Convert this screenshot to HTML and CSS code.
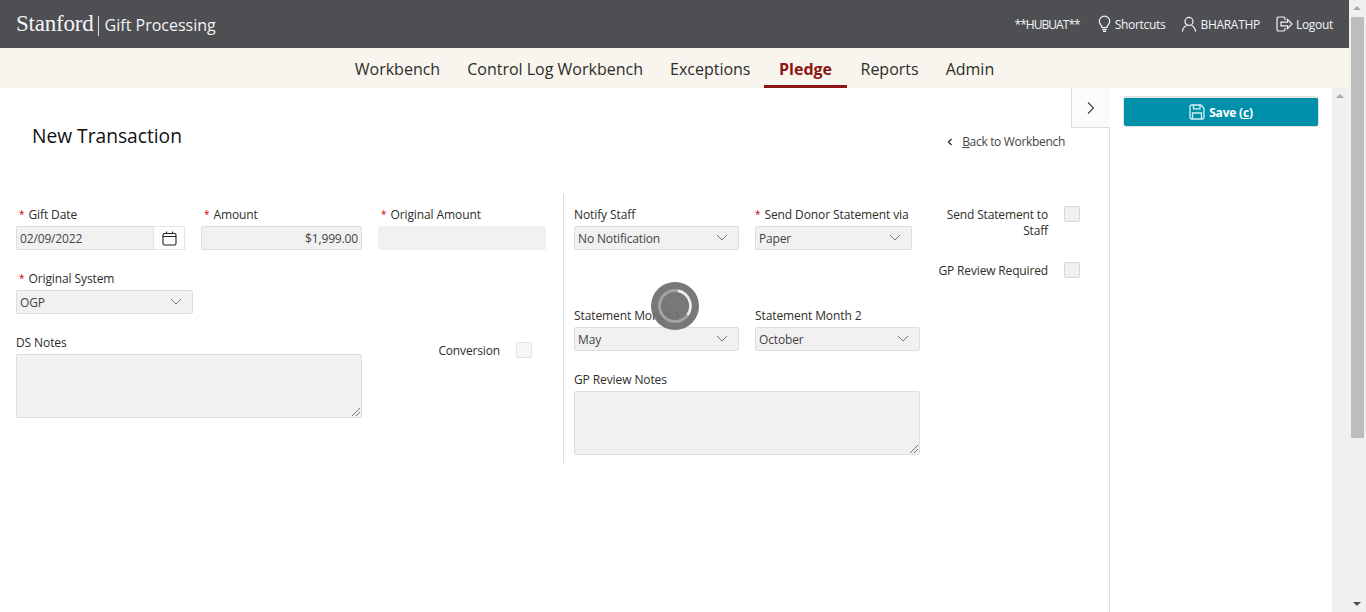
FILE: index.html
```html
<!DOCTYPE html>
<html lang="en">
<head>
  <meta charset="UTF-8" />
  <meta name="viewport" content="width=device-width, initial-scale=1.0"/>
  <title>Gift Processing</title>
  <link rel="stylesheet" href="styles.css">
</head>
<body>
  <div class="app">
    <!-- Top bar -->
    <header class="topbar">
      <div class="brand"><span class="brand-name">Stanford</span><span class="brand-sep"></span><span class="brand-app">Gift Processing</span></div>
      <div class="topbar-links">
        <span class="env">**HUBUAT**</span>
        <a class="top-link">
          <svg width="15" height="18" viewBox="0 0 15 18" fill="none" stroke="currentColor" stroke-width="1.2"><path d="M5.100 12.500c0-2-2.800-3.200-2.800-6.200a5.200 5.200 0 0 1 10.400 0c0 3-2.800 4.200-2.800 6.200z"/><path d="M5.300 14.400h4.400M5.900 16.200h3.200" stroke-width="1.4"/></svg>
          Shortcuts
        </a>
        <a class="top-link">
          <svg width="16" height="17" viewBox="0 0 16 17" fill="none" stroke="currentColor" stroke-width="1.2"><circle cx="8" cy="5.4" r="4"/><path d="M1.4 15.6c.3-3.4 2.6-5.2 4-6M14.6 15.6c-.3-3.4-2.6-5.2-4-6"/></svg>
          BHARATHP
        </a>
        <a class="top-link">
          <svg width="17" height="16" viewBox="0 0 17 16" fill="none" stroke="currentColor" stroke-width="1.2"><path d="M9 4V2.600C9 1.700 8.300 1 7.400 1H2.600C1.700 1 1 1.700 1 2.600v10.800c0 .9.7 1.600 1.600 1.600h4.800c.9 0 1.600-.7 1.600-1.600V12"/><path d="M5 6.200h6.500V3.400L16 8l-4.500 4.600V9.800H5z"/></svg>
          Logout
        </a>
      </div>
    </header>

    <!-- Main nav -->
    <nav class="mainnav">
      <a>Workbench</a>
      <a>Control Log Workbench</a>
      <a>Exceptions</a>
      <a class="active">Pledge</a>
      <a>Reports</a>
      <a>Admin</a>
    </nav>

    <div class="content">
      <main class="main">
        <button class="panel-toggle">
          <svg width="10" height="14" viewBox="0 0 10 14" fill="none" stroke="#444" stroke-width="1.2"><path d="M2 1.500 7.500 7 2 12.500"/></svg>
        </button>

        <div class="page-head">
          <h1>New Transaction</h1>
          <a class="back-link">
            <svg width="6" height="8" viewBox="0 0 6 8" fill="none" stroke="#333" stroke-width="1.400"><path d="M4.500 1 1.500 4l3 3"/></svg>
            <span><u>B</u>ack to Workbench</span>
          </a>
        </div>

        <div class="form">
          <section class="form-left">
            <div class="field">
              <label><i>*</i> Gift Date</label>
              <div class="date-input">
                <span class="box grow">02/09/2022</span>
                <span class="cal-btn">
                  <svg width="15" height="15" viewBox="0 0 15 15" fill="none" stroke="#222" stroke-width="1.100"><rect x="1" y="2.500" width="13" height="11.500" rx="1.500"/><path d="M1 5.500h13M4.500 .5v2.500M10.500 .5v2.500"/></svg>
                </span>
              </div>
            </div>
            <div class="field">
              <label><i>*</i> Amount</label>
              <span class="box right">$1,999.00</span>
            </div>
            <div class="field">
              <label><i>*</i> Original Amount</label>
              <span class="box plain"></span>
            </div>

            <div class="field wide-system">
              <label><i>*</i> Original System</label>
              <span class="box select">OGP<svg class="caret" width="12" height="7" viewBox="0 0 12 7" fill="none" stroke="#777"><path d="M1 1l5 5 5-5"/></svg></span>
            </div>

            <div class="field notes-left">
              <label>DS Notes</label>
              <div class="box area"><span class="grip"></span></div>
            </div>
            <div class="check-row conversion">
              <span>Conversion</span>
              <span class="check light"></span>
            </div>
          </section>

          <section class="form-right">
            <div class="field">
              <label>Notify Staff</label>
              <span class="box select">No Notification<svg class="caret" width="12" height="7" viewBox="0 0 12 7" fill="none" stroke="#777"><path d="M1 1l5 5 5-5"/></svg></span>
            </div>
            <div class="field">
              <label><i>*</i> Send Donor Statement via</label>
              <span class="box select short">Paper<svg class="caret" width="12" height="7" viewBox="0 0 12 7" fill="none" stroke="#777"><path d="M1 1l5 5 5-5"/></svg></span>
            </div>
            <div class="checks">
              <div class="check-row">
                <span>Send Statement to Staff</span>
                <span class="check"></span>
              </div>
              <div class="check-row">
                <span>GP Review Required</span>
                <span class="check"></span>
              </div>
            </div>

            <div class="field">
              <label>Statement Month 1</label>
              <span class="box select">May<svg class="caret" width="12" height="7" viewBox="0 0 12 7" fill="none" stroke="#777"><path d="M1 1l5 5 5-5"/></svg></span>
            </div>
            <div class="field">
              <label>Statement Month 2</label>
              <span class="box select">October<svg class="caret" width="12" height="7" viewBox="0 0 12 7" fill="none" stroke="#777"><path d="M1 1l5 5 5-5"/></svg></span>
            </div>

            <div class="field notes-right">
              <label>GP Review Notes</label>
              <div class="box area"><span class="grip"></span></div>
            </div>
          </section>
        </div>

        <!-- Loading spinner -->
        <div class="spinner">
          <svg width="48" height="48" viewBox="0 0 48 48" fill="none">
            <circle cx="24" cy="24" r="15.500" stroke="#a3a3a3" stroke-width="3"/>
            <path d="M27 8.800A15.500 15.500 0 0 1 36.500 33" stroke="#eee" stroke-width="2.500"/>
          </svg>
        </div>
      </main>

      <aside class="side">
        <button class="save-btn">
          <svg width="16" height="16" viewBox="0 0 16 16" fill="none" stroke="#d6eef3" stroke-width="1.300"><path d="M1 2.500C1 1.700 1.700 1 2.500 1h9.300L15 4.200v9.300c0 .8-.7 1.500-1.500 1.500h-11C1.700 15 1 14.300 1 13.500z"/><path d="M4.500 1v3.800h6.500V1M3.500 15V9h9v6"/></svg>
          <span>Save (<u>c</u>)</span>
        </button>
      </aside>
      <div class="scrollbar inner"><b class="arrow-up"></b></div>
    </div>
  </div>

  <div class="scrollbar outer">
    <b class="arrow-up"></b>
    <div class="thumb"></div>
    <b class="arrow-down"></b>
  </div>
</body>
</html>
```

FILE: styles.css
```css
* {
  box-sizing: border-box;
}

body {
  margin: 0;
  height: 612px;
  overflow: hidden;
  display: flex;
  background: #fff;
  color: #2e2d29;
  font-family: 'Open Sans', 'Noto Sans', sans-serif;
  font-size: 12px;
}

.app {
  width: 1349px;
  display: flex;
  flex-direction: column;
}

/* Top bar */
.topbar {
  height: 48px;
  flex: none;
  background: #4d4f53;
  color: #f4f4f4;
  display: flex;
  align-items: center;
  justify-content: space-between;
  padding: 0 16px;
}

.brand {
  display: flex;
  align-items: center;
}

.brand-name {
  font-family: 'Liberation Serif', serif;
  font-size: 23px;
  letter-spacing: -0.2px;
}

.brand-sep {
  width: 1px;
  height: 20px;
  margin: 3px 6px 0 4px;
  background: #ddd;
}

.brand-app {
  font-family: 'Open Sans', sans-serif;
  font-size: 16px;
  font-weight: 500;
  margin-top: 2px;
}

.topbar-links {
  display: flex;
  align-items: center;
  gap: 16px;
  letter-spacing: -0.3px;
}

.env {
  letter-spacing: -0.95px;
  margin-right: 1px;
}

.top-link {
  display: flex;
  align-items: center;
  gap: 3px;
}

/* Main nav */
.mainnav {
  height: 40px;
  flex: none;
  background: #f8f5ee;
  display: flex;
  justify-content: center;
}

.mainnav a {
  padding: 0 13.500px;
  line-height: 42px;
  font-size: 16px;
  color: #2e2d29;
}

.mainnav a.active {
  color: #8c1515;
  font-weight: 700;
  border-bottom: 3px solid #8c1515;
  padding: 0 15px;
}

.content {
  flex: 1;
  display: flex;
  min-height: 0;
}

.main {
  position: relative;
  width: 1110px;
  flex: none;
  padding-left: 16px;
  border-right: 1px solid #ddd;
}

.panel-toggle {
  position: absolute;
  top: 0;
  right: -1px;
  width: 39px;
  height: 40px;
  padding: 0;
  display: flex;
  align-items: center;
  justify-content: center;
  background: #fbfbfb;
  border: 1px solid #ddd;
  border-width: 0 0 1px 1px;
}

.page-head {
  height: 106px;
  display: flex;
  align-items: flex-start;
  justify-content: space-between;
  padding: 35px 44px 0 16px;
}

.page-head h1 {
  margin: 0;
  font-size: 19.200px;
  line-height: 26px;
  font-weight: 500;
  color: #111;
}

.back-link {
  display: flex;
  align-items: center;
  gap: 9px;
  margin-top: 10px;
  color: #444;
  letter-spacing: -0.32px;
}

.form {
  display: flex;
}

.form-left {
  width: 547px;
  flex: none;
  padding-top: 12px;
  display: grid;
  grid-template-columns: 169px 161px 168px;
  grid-auto-rows: min-content;
  gap: 20px 16px;
}

.form-right {
  width: 518px;
  flex: none;
  height: 269px;
  border-left: 1px solid #ddd;
  padding: 12px 0 8px 10px;
  display: grid;
  grid-template-columns: 165px 165px 144px;
  grid-template-rows: 81px 44px 84px;
  gap: 20px 16px;
}

.field label {
  display: block;
  height: 18px;
  line-height: 18px;
  margin-bottom: 2px;
  color: #2e2d29;
  white-space: nowrap;
  letter-spacing: -0.1px;
}

.field label i {
  color: #c00;
  font-style: normal;
  font-size: 10px;
  position: relative;
  top: -1px;
  margin-right: 1px;
}

.form-left .field label {
  padding-left: 3px;
}

.form-left .notes-left label {
  padding-left: 0;
}

.box {
  display: block;
  position: relative;
  height: 24px;
  line-height: 23px;
  padding: 0 3px;
  background: #f1f1f1;
  border: 1px solid #ddd;
  border-radius: 2px;
  color: #444;
  letter-spacing: -0.15px;
}

.box.right {
  text-align: right;
}

.box.plain {
  border: none;
}

.box.short {
  width: 157px;
}

.caret {
  position: absolute;
  right: 10px;
  top: 7px;
}

.box.area {
  height: 64px;
}

.grip {
  position: absolute;
  right: 1px;
  bottom: 1px;
  width: 9px;
  height: 9px;
  background: linear-gradient(135deg, transparent 50%, #777 50%, #777 58%, transparent 58%, transparent 74%, #777 74%, #777 82%, transparent 82%);
}

.date-input {
  display: flex;
}

.date-input .box.grow {
  flex: 1;
  border-right: none;
  border-radius: 2px 0 0 2px;
}

.cal-btn {
  width: 32px;
  height: 24px;
  background: #fff;
  border: 1px solid #e4e4e4;
  display: flex;
  align-items: center;
  justify-content: center;
}

.wide-system {
  grid-column: 1 / -1;
  width: 177px;
}

.notes-left {
  grid-column: 1 / 3;
}

.conversion {
  margin: 8px 14px 0 0;
}

.notes-right {
  grid-column: 1 / 3;
}

.checks {
  grid-column: 3;
  grid-row: 1 / 4;
  display: flex;
  flex-direction: column;
  gap: 23px;
}

.check-row {
  display: flex;
  justify-content: flex-end;
  gap: 16px;
  text-align: right;
  line-height: 16px;
  letter-spacing: -0.15px;
}

.check-row > span:first-child {
  padding-top: 1px;
}

.check {
  width: 16px;
  height: 16px;
  flex: none;
  background: #f1f1f1;
  border: 1px solid #d8d8d8;
  border-radius: 2px;
}

.check.light {
  background: #f7f7f7;
  border-color: #e4e4e4;
}

.spinner {
  position: absolute;
  left: 651px;
  top: 194px;
  width: 48px;
  height: 48px;
  border-radius: 50%;
  background: rgba(112, 112, 112, 0.94);
}

.spinner svg {
  display: block;
}

/* Right panel */
.side {
  width: 222px;
  flex: none;
  padding: 8px 13px;
}

.save-btn {
  width: 196px;
  height: 31px;
  display: flex;
  align-items: center;
  justify-content: center;
  gap: 4px;
  padding: 0;
  background: #0090aa;
  border: 1px solid #e2e2e2;
  border-top-width: 2px;
  border-radius: 3px;
  color: #fff;
  font-family: inherit;
  font-size: 12px;
  font-weight: 700;
  letter-spacing: -0.2px;
}

/* Scrollbars */
.scrollbar {
  flex: none;
  width: 17px;
  background: #f0f0f0;
  position: relative;
}

.scrollbar.outer {
  height: 612px;
}

.arrow-up,
.arrow-down {
  position: absolute;
  left: 4px;
  width: 0;
  height: 0;
  border-left: 4px solid transparent;
  border-right: 4px solid transparent;
}

.arrow-up {
  top: 6px;
  border-bottom: 4px solid #a8a8a8;
}

.arrow-down {
  bottom: 6px;
  border-top: 4px solid #505050;
}

.thumb {
  position: absolute;
  top: 17px;
  left: 2px;
  width: 13px;
  height: 421px;
  background: #bdbdbd;
}
```
